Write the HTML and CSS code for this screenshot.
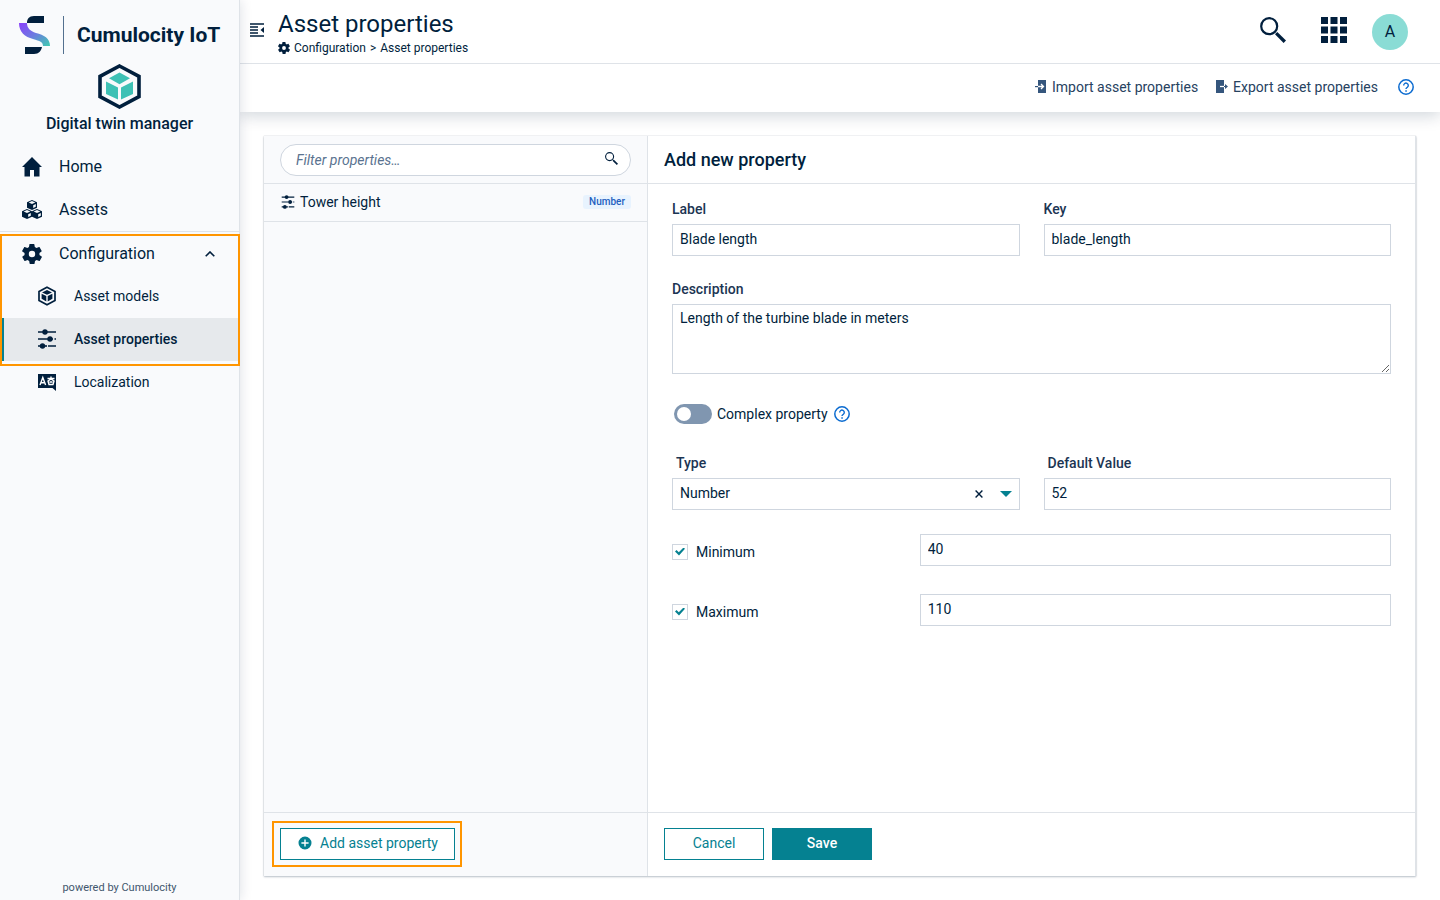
FILE: index.html
```html
<!DOCTYPE html>
<html lang="en">
<head>
<meta charset="utf-8">
<title>Asset properties - Digital twin manager</title>
<link rel="stylesheet" href="styles.css">
</head>
<body>
<svg class="sprite" aria-hidden="true">
  <symbol id="gear" viewBox="2 2 20 20"><path d="M19.4 13c.1-.3.1-.7.1-1s0-.7-.1-1l2.100-1.600c.2-.2.3-.4.1-.7l-2-3.400c-.1-.2-.4-.3-.6-.2l-2.500 1c-.5-.4-1.100-.7-1.700-1l-.4-2.600c0-.3-.2-.5-.5-.5h-4c-.3 0-.5.2-.5.400l-.4 2.700c-.6.2-1.100.6-1.700 1l-2.500-1c-.2-.1-.5 0-.6.2l-2 3.400c-.1.200-.1.500.1.700L4.600 11c0 .3-.1.700-.1 1s0 .7.1 1l-2.100 1.600c-.2.200-.2.400-.1.700l2 3.400c.1.200.4.300.6.200l2.500-1c.5.4 1.100.7 1.700 1l.4 2.600c0 .300.200.500.500.500h4c.3 0 .5-.2.500-.400l.4-2.700c.6-.2 1.100-.6 1.700-1l2.500 1c.2.100.5 0 .6-.2l2-3.400c.1-.2.1-.5-.1-.7zM12 15.200a3.200 3.200 0 1 1 0-6.400 3.200 3.200 0 0 1 0 6.400z"/></symbol>
  <symbol id="search" viewBox="0 0 26 26"><circle cx="9.200" cy="9.200" r="8" fill="none" stroke="currentColor" stroke-width="2.200"/><path d="M15 17.300 17.300 15 26 23.600 23.600 26z"/></symbol>
  <symbol id="sliders" viewBox="0 0 20 20"><path fill="none" stroke="currentColor" stroke-width="1.600" d="M1 3h5M9 3h10M1 10h10M14 10h2M17.500 10H19M1 17h3M11 17h8"/><circle cx="8" cy="3" r="2.700"/><circle cx="13" cy="10" r="2.700"/><circle cx="5.500" cy="17" r="2.700"/><path fill="none" stroke="currentColor" stroke-width="1.600" d="M5 17h5"/></symbol>
  <symbol id="help" viewBox="0 0 16 16"><circle cx="8" cy="8" r="7.200" fill="none" stroke="currentColor" stroke-width="1.500"/><path d="M5.700 6.500a2.300 2.300 0 1 1 3.700 1.700C8.400 9 8 9.200 8 10.100" fill="none" stroke="currentColor" stroke-width="1.400"/><path d="M7.300 11.200h1.500v1.500H7.300z"/></symbol>
  <symbol id="box" viewBox="0 0 10 10"><path d="M5 0 10 2.200v5.500L5 10 0 7.700V2.200z"/><path d="M5 .9 8.300 2.400 5 3.900 1.700 2.400zM6.200 5.300 8.800 4.100v2.700L6.200 8.100z" fill="#f9fafc"/></symbol>
</svg>
<div class="app">
  <aside class="sidebar">
    <div class="brand">
      <svg class="brand-logo" viewBox="0 0 46 40" aria-hidden="true">
        <defs><linearGradient id="band" x1="0" y1="0" x2="1" y2="1"><stop offset="0" stop-color="#8a3ffc"/><stop offset=".5" stop-color="#6c7be0"/><stop offset="1" stop-color="#3fcbb0"/></linearGradient></defs>
        <path fill="#011f3d" d="M15 1h10v7H8c0-4 2-7 7-7zM6 32h17c-1 4-3 7-8 7H6z"/>
        <path fill="url(#band)" d="M0 8h8c0 5 3 8 9 10 8 2 14 5 14 13h-7c0-4-3-5-10-7C6 22 0 17 0 8z"/>
        <path fill="#53708f" d="M44 1h1v38h-1z"/>
      </svg>
      <span class="brand-name">Cumulocity IoT</span>
    </div>
    <div class="product">
      <svg class="product-icon" viewBox="0 0 43 45" aria-hidden="true">
        <path d="M21.500 2 41 12.300v20.400L21.500 43 2 32.700V12.300z" fill="none" stroke="#011f3d" stroke-width="3.600"/>
        <path fill="#3ec1b5" d="M21.500 8.500 32 14.300l-10.500 6L11 14.300zM8 17.500l12 6v12L8 30zM35 17.500l-12 6v12L35 30z"/>
      </svg>
      <span class="product-name">Digital twin manager</span>
    </div>
    <nav class="nav">
      <a class="nav-item" href="#"><svg viewBox="0 0 20 20"><path d="M10 0 20 10h-2.500v9.500H12V13H8v6.500H2.500V10H0z"/></svg>Home</a>
      <a class="nav-item" href="#"><svg viewBox="0 0 20 20"><use href="#box" x="5" y="0" width="10" height="10"/><use href="#box" x="0" y="9" width="10" height="10"/><use href="#box" x="10" y="9" width="10" height="10"/></svg>Assets</a>
      <div class="nav-group">
        <a class="nav-item" href="#"><svg><use href="#gear"/></svg>Configuration<svg class="chevron" viewBox="0 0 10 6"><path d="M.7 5.300 5 1l4.300 4.300" fill="none" stroke="currentColor" stroke-width="1.600"/></svg></a>
        <a class="nav-item nav-child" href="#"><svg viewBox="0 0 20 20"><path d="M10 1.200 18 5.600v8.800l-8 4.400-8-4.400V5.600z" fill="none" stroke="currentColor" stroke-width="1.700"/><path d="m10 4 5 2.400-5 2.300-5-2.300zM4.600 7.700l4.700 2.200v5.500l-4.700-2.600zM15.400 7.700l-4.700 2.200v5.500l4.700-2.600z"/></svg>Asset models</a>
        <a class="nav-item nav-child active" href="#"><svg><use href="#sliders"/></svg>Asset properties</a>
      </div>
      <a class="nav-item nav-child" href="#"><svg viewBox="0 0 20 20"><path d="M1 2h18v17l-3.500-3H1z"/><path d="m3 13 2.800-7.500L8.600 13M4 10.800h3.600M10.500 6.500h7M14 4.500v2M12 12.500h4L17 9l-3-2-3 2zM12.500 10h3" fill="none" stroke="#fff" stroke-width="1.400"/></svg>Localization</a>
    </nav>
    <p class="powered">powered by Cumulocity</p>
  </aside>
  <div class="page">
    <header class="header">
      <button class="icon-button" aria-label="Collapse navigation"><svg class="collapse" viewBox="0 0 14 14"><path d="M0 1h14M0 4h8M0 7h8M0 10h8M0 13h14" fill="none" stroke="currentColor" stroke-width="1.300"/><path d="M14 4v6l-3.500-3z"/></svg></button>
      <div class="heading">
        <h1>Asset properties</h1>
        <div class="breadcrumb"><svg><use href="#gear"/></svg><a href="#">Configuration</a><span>&gt;</span><span>Asset properties</span></div>
      </div>
      <div class="header-tools">
        <button class="icon-button" aria-label="Search"><svg class="tool"><use href="#search"/></svg></button>
        <button class="icon-button" aria-label="Applications"><svg class="tool" viewBox="0 0 26 26"><path d="M0 0h7v7H0zM9.500 0h7v7h-7zM19 0h7v7h-7zM0 9.500h7v7H0zM9.500 9.500h7v7h-7zM19 9.500h7v7h-7zM0 19h7v7H0zM9.500 19h7v7h-7zM19 19h7v7h-7z"/></svg></button>
      </div>
      <button class="avatar" aria-label="User menu">A</button>
    </header>
    <div class="actions">
      <button class="action"><svg viewBox="0 0 12 14"><path d="M3 0h8v13H3z"/><path d="M3 6.500h5M6 4l2.500 2.500L6 9" fill="none" stroke="#fff" stroke-width="1.300"/><path d="M0 6h3v1.200H0z"/></svg>Import asset properties</button>
      <button class="action"><svg viewBox="0 0 12 14"><path d="M0 0h8v13H0z"/><path d="M4 6.500h4" stroke="#fff" stroke-width="1.300"/><path d="M8 5.900h1V4l3 2.500L9 9V7.100H8z"/></svg>Export asset properties</button>
      <button class="help" aria-label="Help"><svg><use href="#help"/></svg></button>
    </div>
    <main class="card">
      <section class="list-panel">
        <div class="panel-head">
          <div class="filter"><input type="search" placeholder="Filter properties…" aria-label="Filter properties"><svg><use href="#search"/></svg></div>
        </div>
        <div class="list-row"><svg><use href="#sliders"/></svg><span>Tower height</span><span class="tag">Number</span></div>
        <div class="panel-foot"><div class="callout"><button class="btn btn-add"><svg viewBox="0 0 14 14"><path d="M7 .5a6.500 6.500 0 1 0 0 13 6.500 6.500 0 0 0 0-13zm3.600 7.200H7.700v2.900H6.300V7.700H3.400V6.300h2.900V3.400h1.400v2.900h2.900z"/></svg>Add asset property</button></div></div>
      </section>
      <form class="form-panel">
        <h2 class="panel-head">Add new property</h2>
        <div class="fields">
          <div class="row">
            <div class="field"><label for="label">Label</label><input class="control" id="label" value="Blade length"></div>
            <div class="field"><label for="key">Key</label><input class="control" id="key" value="blade_length"></div>
          </div>
          <div class="field description"><label for="desc">Description</label><textarea class="control" id="desc">Length of the turbine blade in meters</textarea></div>
          <div class="switch-row">
            <input type="checkbox" role="switch" class="switch" id="complex"><label for="complex">Complex property</label>
            <button type="button" class="help" aria-label="Help on complex property"><svg><use href="#help"/></svg></button>
          </div>
          <div class="row">
            <div class="field indent"><label for="type">Type</label>
              <div class="select"><select class="control" id="type"><option>Number</option></select><button type="button" class="clear" aria-label="Clear"><svg viewBox="0 0 8 8"><path d="m.6.6 6.800 6.800M7.400.6.6 7.400" fill="none" stroke="currentColor" stroke-width="1.400"/></svg></button><svg class="caret" viewBox="0 0 12 6"><path d="M0 0h12L6 6z"/></svg></div>
            </div>
            <div class="field indent"><label for="default">Default Value</label><input class="control" id="default" value="52"></div>
          </div>
          <div class="limit"><label><input type="checkbox" class="check" checked>Minimum</label><input class="control" aria-label="Minimum value" value="40"></div>
          <div class="limit"><label><input type="checkbox" class="check" checked>Maximum</label><input class="control" aria-label="Maximum value" value="110"></div>
        </div>
        <div class="panel-foot"><button type="button" class="btn">Cancel</button><button type="button" class="btn btn-primary">Save</button></div>
      </form>
    </main>
  </div>
</div>
</body>
</html>
```
FILE: styles.css
```css
:root {
  --ink: #011f3d;
  --teal: #058191;
  --line: #dfe3e8;
  --edge: #cfd6df;
  --panel: #f9fafc;
  --callout: #ff9500;
}
* { box-sizing: border-box; }
body {
  margin: 0;
  font: 14px/20px Roboto, "Liberation Sans", sans-serif;
  color: var(--ink);
  background: #fff;
}
svg { display: block; flex: none; fill: currentColor; }
button, input, textarea, select { font: inherit; color: inherit; }
button { padding: 0; border: 0; background: none; cursor: pointer; }
a { color: inherit; text-decoration: none; }
h1, h2, p { margin: 0; font-weight: 400; }
.sprite { position: absolute; width: 0; height: 0; }
.app { display: flex; min-height: 100vh; }

.sidebar {
  position: relative;
  z-index: 2;
  flex: 0 0 240px;
  display: flex;
  flex-direction: column;
  padding-top: 15px;
  background: var(--panel);
  border-right: 1px solid var(--line);
  box-shadow: 0 0 12px rgba(1, 31, 61, .14);
}
.brand { display: flex; align-items: center; gap: 12px; padding-left: 19px; }
.brand-logo { width: 46px; height: 40px; }
.brand-name { font-size: 21px; font-weight: 700; white-space: nowrap; }
.product { display: flex; flex-direction: column; align-items: center; gap: 5px; padding: 9px 0 11px; }
.product-icon { width: 43px; height: 45px; }
.product-name { font-size: 16px; font-weight: 500; }
.nav-item {
  display: flex;
  align-items: center;
  gap: 17px;
  height: 43px;
  padding: 0 24px 0 22px;
  font-size: 16px;
}
.nav-item svg { width: 20px; height: 20px; }
.nav-item .chevron { width: 10px; height: 6px; margin-left: auto; }
.nav-child { padding-left: 37px; padding-bottom: 2px; font-size: 14px; }
.nav-group { position: relative; border-top: 1px solid var(--line); }
.nav-group::after {
  content: "";
  position: absolute;
  inset: 2px -1px -5px 0;
  border: 2px solid var(--callout);
  pointer-events: none;
}
.nav-child.active {
  margin-left: 2px;
  padding-left: 33px;
  border-left: 2px solid var(--teal);
  background: #e6e9ec;
  font-weight: 500;
}
.powered { margin-top: auto; padding-bottom: 4px; font-size: 11px; line-height: 16px; text-align: center; color: #41566d; }

.page { flex: 1; min-width: 0; display: flex; flex-direction: column; }
.header {
  position: relative;
  z-index: 1;
  display: flex;
  align-items: center;
  height: 64px;
  padding: 0 32px 0 10px;
  background: #fff;
  border-bottom: 1px solid var(--line);
}
.icon-button { padding-bottom: 4px; }
.collapse { width: 14px; height: 14px; }
.heading { margin-left: 14px; padding-top: 1px; }
h1 { font-size: 24px; line-height: 32px; }
.breadcrumb { display: flex; align-items: center; gap: 4px; font-size: 12px; line-height: 16px; }
.breadcrumb svg { width: 12px; height: 12px; }
.header-tools { display: flex; align-items: center; gap: 35px; margin: 0 25px 0 auto; }
.tool { width: 26px; height: 26px; }
.avatar { width: 36px; height: 36px; border-radius: 50%; background: #8adcd5; font-size: 16px; }
.actions {
  display: flex;
  align-items: center;
  justify-content: flex-end;
  gap: 18px;
  height: 48px;
  padding: 0 26px 3px 24px;
  box-shadow: 0 4px 16px rgba(1, 31, 61, .18);
}
.action { display: flex; align-items: center; gap: 5px; color: #27425f; }
.action svg { width: 12px; height: 14px; color: #35567d; }
.help { color: #0b6bd0; }
.actions .help { margin-left: 2px; }
.help svg { width: 16px; height: 16px; }

.card {
  flex: 1;
  display: grid;
  grid-template-columns: 1fr 2fr;
  margin: 24px;
  background: #fff;
  box-shadow: 0 0 1px rgba(1, 31, 61, .25), 0 1px 2px rgba(1, 31, 61, .25);
}
.list-panel, .form-panel { display: flex; flex-direction: column; min-width: 0; }
.list-panel { background: var(--panel); border-right: 1px solid var(--line); }
.form-panel { border-right: 1px solid var(--line); }
.panel-head { display: flex; align-items: center; height: 48px; padding: 0 16px; border-bottom: 1px solid var(--line); }
h2.panel-head { font-size: 18px; font-weight: 500; }
.filter { position: relative; flex: 1; }
.filter input {
  display: block;
  width: 100%;
  height: 32px;
  padding: 0 36px 0 15px;
  border: 1px solid var(--edge);
  border-radius: 16px;
  background: #fff;
}
.filter input::placeholder { color: #5a7390; font-style: italic; opacity: 1; }
.filter svg { position: absolute; top: 8px; right: 13px; width: 13px; height: 13px; }
.list-row { display: flex; align-items: center; gap: 5px; height: 38px; padding: 0 16px 1px 17px; border-bottom: 1px solid var(--line); }
.list-row svg { width: 14px; height: 14px; }
.tag { margin-left: auto; padding: 0 6px; border-radius: 3px; background: #e8f3fe; color: #1f5fc0; font-size: 10px; line-height: 14px; font-weight: 500; }
.panel-foot { display: flex; gap: 8px; align-items: center; height: 64px; margin-top: auto; padding: 0 16px 2px; border-top: 1px solid var(--line); }
.btn {
  min-width: 100px;
  height: 32px;
  padding-bottom: 2px;
  border: 1px solid var(--teal);
  background: #fff;
  color: var(--teal);
}
.btn-primary { background: var(--teal); color: #fff; font-weight: 500; }
.btn-add { display: flex; align-items: center; gap: 8px; padding: 0 16px 2px 17px; }
.btn-add svg { width: 14px; height: 14px; }
.callout { position: relative; }
.callout::after { content: ""; position: absolute; inset: -7px -7px -7px -8px; border: 2px solid var(--callout); pointer-events: none; }

.fields { padding: 14px 24px; }
.row { display: grid; grid-template-columns: 1fr 1fr; gap: 24px; }
.field label { display: block; margin-bottom: 4px; line-height: 22px; font-weight: 500; color: #1c3553; }
.indent label { padding-left: 4px; }
.control {
  display: block;
  width: 100%;
  height: 32px;
  padding: 0 7px 2px;
  border: 1px solid var(--edge);
  border-radius: 0;
  background: #fff;
}
textarea.control { height: 70px; padding-top: 3px; resize: vertical; }
.description { margin-top: 22px; }
.switch-row { display: flex; align-items: center; margin: 30px 0 28px 2px; }
.switch-row .help { margin-left: 6px; }
.switch {
  appearance: none;
  width: 38px;
  height: 20px;
  margin: 0 5px 0 0;
  padding: 3px;
  border-radius: 10px;
  background: #8096b0;
}
.switch::before { content: ""; display: block; width: 14px; height: 14px; border-radius: 50%; background: #fff; }
.switch:checked { background: var(--teal); }
.switch:checked::before { margin-left: auto; }
.select { position: relative; }
select.control { appearance: none; }
.clear { position: absolute; top: 12px; right: 37px; }
.clear svg { width: 8px; height: 8px; }
.caret { position: absolute; top: 13px; right: 8px; width: 12px; height: 6px; color: var(--teal); pointer-events: none; }
.limit { display: grid; grid-template-columns: repeat(3, 1fr); column-gap: 24px; margin-top: 24px; }
.limit + .limit { margin-top: 28px; }
.limit label { display: flex; align-items: center; gap: 8px; padding-top: 3px; }
.limit .control { grid-column: span 2; }
.check {
  appearance: none;
  display: grid;
  place-items: center;
  width: 16px;
  height: 16px;
  margin: 0;
  border: 1px solid var(--edge);
  background: #fff;
}
.check:checked::before {
  content: "";
  width: 10px;
  height: 8px;
  background: var(--teal);
  clip-path: polygon(0 50%, 15% 32%, 38% 60%, 85% 0, 100% 15%, 40% 100%);
}
```
